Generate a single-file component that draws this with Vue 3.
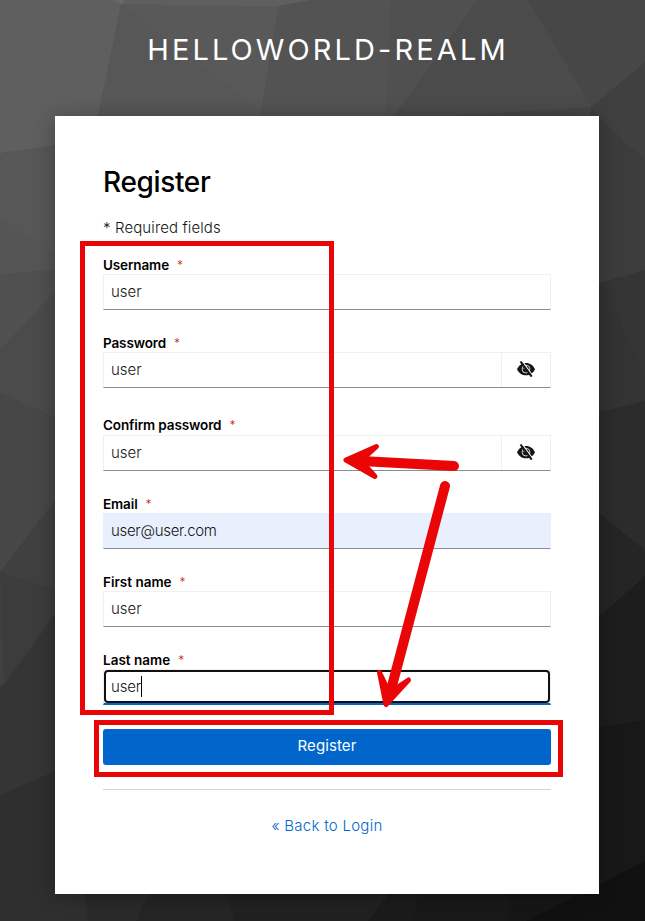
<script setup>
const fields = [
  { id: 'username', label: 'Username', value: 'user' },
  { id: 'password', label: 'Password', value: 'user', secret: true },
  { id: 'confirm', label: 'Confirm password', value: 'user', secret: true },
  { id: 'email', label: 'Email', value: 'user@user.com', filled: true },
  { id: 'first', label: 'First name', value: 'user' },
  { id: 'last', label: 'Last name', value: 'user', focused: true },
]
</script>

<template>
  <div class="page">
    <svg class="backdrop" viewBox="0 0 645 921" aria-hidden="true" shape-rendering="crispEdges">
      <rect width="645" height="921" fill="#4b4b4b" />
      <path fill="#5f5f5f" d="M0 0H310L278 6 122 4 98 116 98 130 55 145 0 153Z" />
      <path fill="#626262" d="M27 0H122L98 116 76 116Z" opacity=".35" />
      <path fill="#686868" d="M112 0H125L122 4Z" />
      <path fill="#575757" d="M121 4L278 6 261 110V120H97ZM0 153L55 145 98 116V269L0 274Z" />
      <path fill="#595959" d="M122 4L278 6 261 110Z" />
      <path fill="#555" d="M0 217L55 255V269L0 274Z" />
      <path fill="#535353" d="M278 6L310 0H390L386 120H261V110Z" />
      <path fill="#505050" d="M390 0H477L394 116V120H386ZM0 274L55 269V291L0 350Z" />
      <path fill="#4b4b4b" d="M477 0H528L591 107 394 120V116Z" />
      <path fill="#474747" d="M528 0H645V62L591 107ZM0 392L55 417V500L0 572Z" />
      <path fill="#404040" d="M645 62V100L591 107ZM0 572L55 500V590Z" />
      <path fill="#464646" d="M450 116L591 107V130H450Z" />
      <path fill="#3c3c3c" d="M591 107L645 100V270L599 283ZM0 572L55 590V614L4 684Z" />
      <path fill="#404040" d="M600 118L591 107 645 100V160ZM0 572L4 684 0 686Z" />
      <path fill="#353535" d="M599 283L645 270V401L599 412Z M0 686L4 684 55 614V771L0 795Z" />
      <path fill="#333" d="M604 282L645 378V401L599 412V283Z" />
      <path fill="#2c2c2c" d="M599 412L645 401V550L599 513Z" />
      <path fill="#252525" d="M599 513L645 550V576L602 614 599 612Z" />
      <path fill="#1d1d1d" d="M599 612L602 614 645 576V720L599 727Z" />
      <path fill="#181818" d="M599 727L645 720V861L588 890Z" />
      <path fill="#2f2f2f" d="M0 795L55 771 84 894 88 921H0Z" />
      <path fill="#2a2a2a" d="M55 850H148V894L136 921H88L84 894Z" />
      <path fill="#252525" d="M148 894H227L234 921H136Z" />
      <path fill="#212121" d="M227 894H389L368 921H234Z" />
      <path fill="#1b1b1b" d="M389 894H417L413 921H368Z" />
      <path fill="#191919" d="M417 894H509L508 921H413Z" />
      <path fill="#161616" d="M509 894L588 890 526 921H508Z" />
      <path fill="#111" d="M645 861V921H526L588 890Z" />
    </svg>

    <header class="realm">HELLOWORLD-REALM</header>

    <main class="card">
      <h1>Register</h1>
      <p class="required">* Required fields</p>
      <form @submit.prevent>
        <div v-for="f in fields" :key="f.id" class="field" :class="f.id">
          <label :for="f.id"><span class="name">{{ f.label }}</span><span class="star">*</span></label>
          <div class="control" :class="{ filled: f.filled, focused: f.focused }">
            <div :id="f.id" class="value">{{ f.value }}<i v-if="f.focused" class="caret"></i></div>
            <button v-if="f.secret" type="button" class="toggle" aria-label="Show password">
              <svg viewBox="0 0 18 16" width="18" height="16">
                <path fill="#151515" d="M0 8.200C1.600 4.200 5 1.900 9 1.900S16.400 4.200 18 8.200C16.400 12 13 14.300 9 14.300S1.600 12 0 8.200Z" />
                <circle cx="9" cy="8.100" r="3.900" fill="none" stroke="#fff" stroke-width=".8" />
                <path d="M9 6A2.100 2.100 0 0 0 6.900 8.100" stroke="#fff" stroke-width=".9" fill="none" />
                <path d="M5.300.2L16 15" stroke="#fff" stroke-width="1.200" />
                <path d="M3.500.5L14.700 15.700" stroke="#151515" stroke-width="2" />
              </svg>
            </button>
          </div>
        </div>
        <button class="submit" type="submit">Register</button>
      </form>
      <footer><a>« Back to Login</a></footer>
    </main>

    <svg class="marks" viewBox="0 0 645 921" aria-hidden="true">
      <g fill="none" stroke="#ea0606" stroke-width="5">
        <rect x="82.5" y="243.500" width="249" height="469" />
        <rect x="96.500" y="722.500" width="464" height="52" />
      </g>
      <g fill="#ea0606" stroke="#ea0606" stroke-linejoin="round" stroke-linecap="round">
        <path stroke-width="10" d="M454 466L366 461.200" />
        <path stroke-width="5" d="M346 460L376.500 446.500 364 458 363 463 375 476.500Z" />
        <path stroke-width="10" d="M445 486L392 686" />
        <path stroke-width="5" d="M386 704.500L379.500 672.500 388 690 393 690 408.500 680Z" />
      </g>
    </svg>
  </div>
</template>

<style>
body { margin: 0; }
</style>

<style scoped>
* { box-sizing: border-box; }
.page {
  position: relative;
  width: 645px;
  height: 921px;
  overflow: hidden;
  font-family: Inter, "Open Sans", sans-serif;
  color: #151515;
}
.backdrop, .marks { position: absolute; inset: 0; width: 645px; height: 921px; }
.marks { pointer-events: none; }
.realm {
  position: relative;
  height: 116px;
  padding: 32px 0 0 11px;
  text-align: center;
  font-size: 29px;
  line-height: 36px;
  font-weight: 400;
  letter-spacing: 3.100px;
  color: #fff;
}
.card {
  position: relative;
  width: 544px;
  height: 778px;
  margin-left: 55px;
  padding: 48px;
  background: #fff;
  box-shadow: 0 2px 20px rgba(0, 0, 0, .3);
}
h1 { margin: 0; padding-top: 1px; font-size: 28px; line-height: 35px; font-weight: 450; color: #000; letter-spacing: -.350px; }
.required { margin: 16px 0 0; font-size: 15px; line-height: 24px; font-weight: 350; letter-spacing: .120px; }
form { display: flex; flex-direction: column; padding-top: 16px; }
.field { margin-bottom: 24px; }
.field.password { margin-bottom: 28px; }
.field.confirm .control { margin-top: 1px; }
label { display: flex; height: 18px; font-size: 13.500px; line-height: 18px; color: #000; }
.name { font-weight: 600; letter-spacing: -.120px; }
.star { margin-left: 8px; color: #c9190b; font-size: 12px; font-weight: 300; }
.first .name, .last .name { letter-spacing: 0; }
.control {
  display: flex;
  height: 36px;
  border: 1px solid #f0f0f0;
  border-bottom-color: #8a8d90;
}
.value { flex: 1; padding-left: 7px; font-size: 15px; line-height: 34px; font-weight: 350; }
.filled { background: #e8f0fe; border-color: #e8f0fe #e8f0fe #8a8d90; }
.filled .value { letter-spacing: -.300px; }
.toggle {
  display: flex;
  align-items: center;
  justify-content: center;
  width: 49px;
  padding: 0 0 2px;
  border: 0;
  border-left: 1px solid #f0f0f0;
  background: #fff;
}
.focused { border-bottom: 2px solid #06c; }
.focused .value {
  border: 2px solid #101010;
  border-radius: 4px;
  padding-left: 5px;
  line-height: 30px;
  letter-spacing: -.150px;
}
.caret { display: inline-block; width: 1px; height: 21px; background: #000; vertical-align: -5px; }
.submit {
  height: 36px;
  padding: 0 0 2px;
  border: 0;
  border-radius: 3px;
  background: #06c;
  color: #fff;
  font: 400 15px/34px Inter, sans-serif;
  letter-spacing: .100px;
}
footer {
  margin-top: 24px;
  border-top: 1px solid #d2d2d2;
  padding-top: 24px;
  text-align: center;
  font-size: 15px;
  line-height: 24px;
  font-weight: 350;
  letter-spacing: .280px;
  color: #06c;
}
</style>
